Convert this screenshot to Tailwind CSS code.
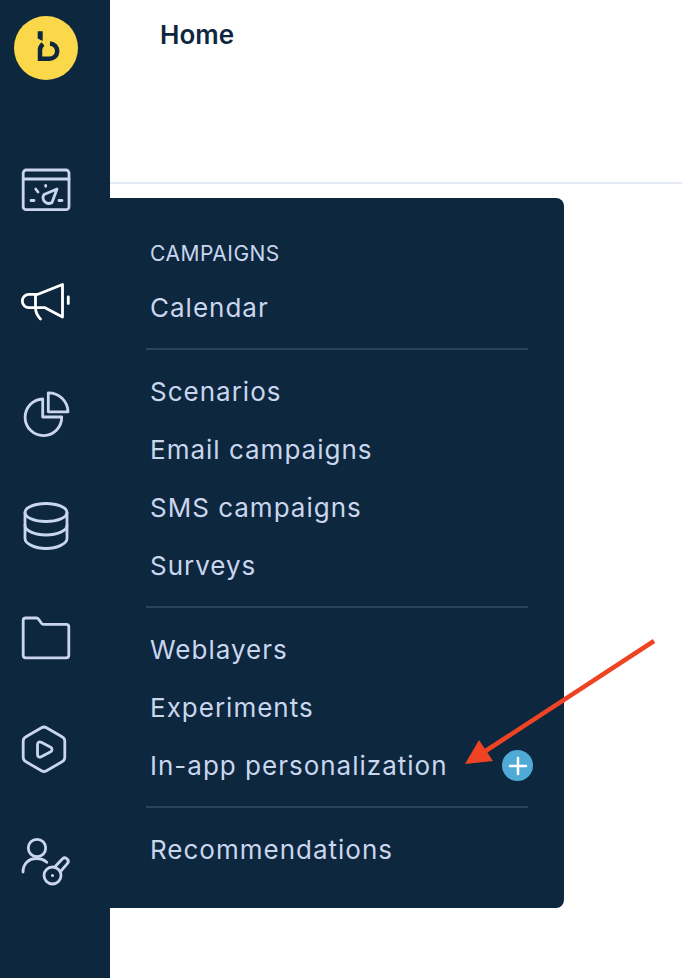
<!DOCTYPE html>
<html lang="en">
<head>
    <meta charset="UTF-8">
    <meta name="viewport" content="width=device-width, initial-scale=1.0">
    <title>Home</title>
    <script src="https://cdn.jsdelivr.net/npm/@tailwindcss/browser@4"></script>
</head>
<body class="bg-white font-['Inter',sans-serif]">
    <div class="relative flex w-[682px] h-[978px] overflow-hidden">
        <!-- sidebar -->
        <nav class="w-[110px] shrink-0 bg-[#0d273e] flex flex-col">
            <div class="ml-[14px] mt-4 w-16 h-16 rounded-full bg-[#fbd84a] flex items-center justify-center">
                <svg width="64" height="64" viewBox="14 16 64 64" fill="none" stroke="#0d273e">
                    <path d="M37.700 31.300H42.700V41L37.700 38.500z" fill="#0d273e" stroke="none"/>
                    <path d="M50 43.400a7.700 7.700 0 1 1-1 15.400H40V50q0-3.500 3-6" stroke-width="4.500"/>
                </svg>
            </div>
            <div class="mt-[54px] flex flex-col text-[#c9d6ee]">
                <a class="h-[112px] pl-[18px] flex items-center">
                    <svg width="56" height="56" viewBox="18 162 56 56" fill="none" stroke="currentColor" stroke-width="2.800" stroke-linecap="round" stroke-linejoin="round">
                        <rect x="23.200" y="170" width="45.800" height="39.700" rx="3"/>
                        <path d="M23.200 179h45.800"/>
                        <path d="M57 189L44 194.500a5.800 5.800 0 0 0 8 8z"/>
                        <path d="M45.700 185.500v.8M35.700 189l2.300 3M31 200.500h3M59 200.500h3"/>
                    </svg>
                </a>
                <a class="h-[112px] pl-[18px] flex items-center text-white">
                    <svg width="56" height="56" viewBox="18 274 56 56" fill="none" stroke="currentColor" stroke-width="2.800" stroke-linecap="round" stroke-linejoin="round">
                        <path d="M62.500 284.500V317L45 307.700H29a6.700 6.700 0 0 1 0-13.400H38z"/>
                        <path d="M35.500 294.500v13c0 4.500 2 8.500 5 11.500"/>
                        <path d="M68.300 297v6.500"/>
                    </svg>
                </a>
                <a class="h-[112px] pl-[18px] flex items-center">
                    <svg width="56" height="56" viewBox="18 386 56 56" fill="none" stroke="currentColor" stroke-width="2.800" stroke-linecap="round" stroke-linejoin="round">
                        <path d="M48.300 392.800a19.500 19.500 0 0 1 19.700 19H48.300z"/>
                        <path d="M42.700 399a18.300 18.300 0 1 0 19 18H42.700z"/>
                    </svg>
                </a>
                <a class="h-[112px] pl-[18px] flex items-center">
                    <svg width="56" height="56" viewBox="18 498 56 56" fill="none" stroke="currentColor" stroke-width="2.800" stroke-linecap="round" stroke-linejoin="round">
                        <ellipse cx="46" cy="512.500" rx="21" ry="9"/>
                        <path d="M25 512.500v26c0 5 9.500 10 21 10s21-5 21-10v-26"/>
                        <path d="M25 525.500c0 5 9.500 9.500 21 9.500s21-4.500 21-9.500"/>
                    </svg>
                </a>
                <a class="h-[112px] pl-[18px] flex items-center">
                    <svg width="56" height="56" viewBox="18 610 56 56" fill="none" stroke="currentColor" stroke-width="2.800" stroke-linecap="round" stroke-linejoin="round">
                        <path d="M23.200 620.500a2.500 2.500 0 0 1 2.500-2.500h11a2 2 0 0 1 1.600.9l3.400 4.600a2 2 0 0 0 1.600.8h23a2.500 2.500 0 0 1 2.500 2.500v28.500a2.500 2.500 0 0 1-2.500 2.500H25.700a2.500 2.500 0 0 1-2.500-2.500z"/>
                    </svg>
                </a>
                <a class="h-[112px] pl-[18px] flex items-center">
                    <svg width="56" height="56" viewBox="18 722 56 56" fill="none" stroke="currentColor" stroke-width="2.800" stroke-linecap="round" stroke-linejoin="round">
                        <path d="M41.500 727.700a5 5 0 0 1 5 0l15.500 9a5 5 0 0 1 2.800 4.300v16.500a5 5 0 0 1-2.800 4.300l-15.500 9a5 5 0 0 1-5 0l-15.500-9a5 5 0 0 1-2.800-4.300V741a5 5 0 0 1 2.800-4.300z"/>
                        <path d="M37.500 744.500c0-2.200 1.800-3.200 3.700-2.200l9.500 5c1.800 1 1.800 3.400 0 4.400l-9.500 5c-1.900 1-3.700 0-3.700-2.200z"/>
                    </svg>
                </a>
                <a class="h-[112px] pl-[18px] flex items-center">
                    <svg width="56" height="56" viewBox="18 834 56 56" fill="none" stroke="currentColor" stroke-width="2.800" stroke-linecap="round" stroke-linejoin="round">
                        <circle cx="37" cy="848" r="8.700"/>
                        <path d="M23 872c0-8 5.500-13.500 13.500-13.500 4 0 7.500 1.300 10.300 3.800"/>
                        <path d="M54.500 867.200L62.500 858.800a3.400 3.400 0 0 1 4.800 4.800L60.500 871.500"/>
                        <circle cx="52.500" cy="875.500" r="8.500"/>
                        <circle cx="52.500" cy="875.500" r="0.800" fill="currentColor" stroke-width="1.500"/>
                    </svg>
                </a>
            </div>
        </nav>

        <!-- main area -->
        <main class="flex-1">
            <header class="h-[184px] border-b-2 border-[#e3eaf6] pl-[50px] pt-[17px]">
                <h1 class="text-[26px] leading-9 font-semibold text-[#0d273e]">Home</h1>
            </header>
        </main>

        <!-- campaigns menu -->
        <div class="absolute left-[110px] top-[198px] w-[454px] h-[710px] bg-[#0d273e] rounded-r-lg px-9 pt-10 text-[#c9d6ee]">
            <div class="h-8 pl-1 flex items-center text-[21px] tracking-[0.5px]">CAMPAIGNS</div>
            <ul class="mt-2 text-[26px] tracking-[1px]">
                <li class="h-[58px] pl-1 flex items-center">Calendar</li>
                <li class="h-0.5 my-3 bg-[#2c435a]"></li>
                <li class="h-[58px] pl-1 flex items-center">Scenarios</li>
                <li class="h-[58px] pl-1 flex items-center">Email campaigns</li>
                <li class="h-[58px] pl-1 flex items-center">SMS campaigns</li>
                <li class="h-[58px] pl-1 flex items-center">Surveys</li>
                <li class="h-0.5 my-3 bg-[#2c435a]"></li>
                <li class="h-[58px] pl-1 flex items-center">Weblayers</li>
                <li class="h-[58px] pl-1 flex items-center">Experiments</li>
                <li class="relative h-[58px] pl-1 flex items-center">In-app personalization
                    <span class="absolute left-[356px] top-[14px] w-[31px] h-[31px] rounded-full bg-[#4fabd6] flex items-center justify-center">
                        <svg width="20" height="20" viewBox="0 0 20 20" stroke="#fff" stroke-width="2.500" stroke-linecap="round"><path d="M10 2v16M2 10h16"/></svg>
                    </span>
                </li>
                <li class="h-0.5 my-3 bg-[#2c435a]"></li>
                <li class="h-[58px] pl-1 flex items-center">Recommendations</li>
            </ul>
        </div>

        <!-- annotation arrow -->
        <svg class="absolute left-0 top-0 pointer-events-none" width="682" height="978" viewBox="0 0 682 978" fill="#ee4423">
            <path d="M654 641L484 752" stroke="#ee4423" stroke-width="4.500"/>
            <path d="M465 764L479 740L493 761z"/>
        </svg>
    </div>
</body>
</html>
